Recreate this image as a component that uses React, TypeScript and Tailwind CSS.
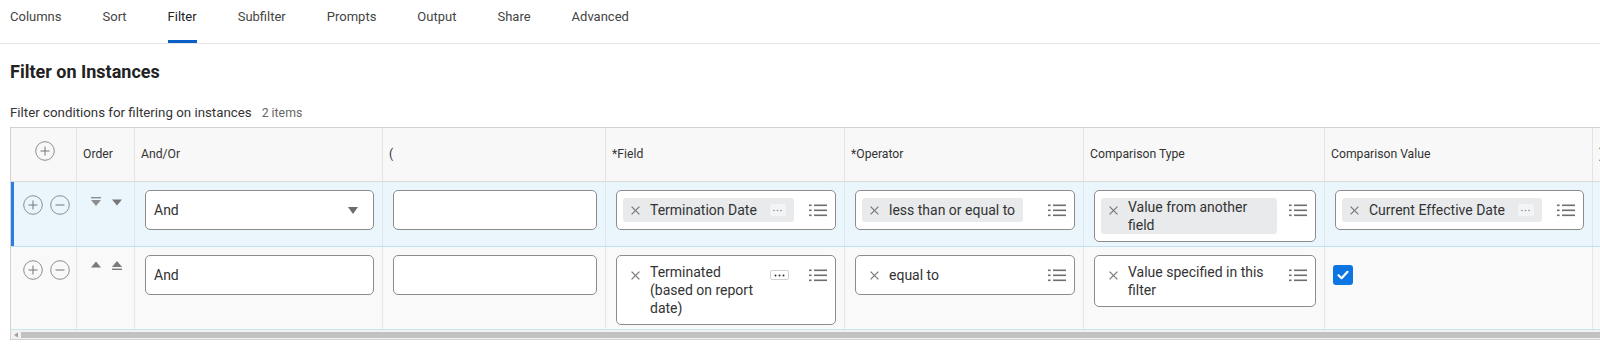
import React from "react";

const COLS = "grid grid-cols-[66px_58px_248px_223px_239px_239px_241px_268px_200px]";

function CircleIcon({ minus = false }: { minus?: boolean }) {
  return (
    <svg width="20" height="20" viewBox="0 0 20 20" className="shrink-0">
      <circle cx="10" cy="10" r="9.3" fill="none" stroke="#8c8c8c" strokeWidth="1" />
      <line x1="5.5" y1="10" x2="14.5" y2="10" stroke="#7f7f7f" strokeWidth="1.1" />
      {!minus && <line x1="10" y1="5.5" x2="10" y2="14.5" stroke="#7f7f7f" strokeWidth="1.1" />}
    </svg>
  );
}

function Tri({ dir, bar, color }: { dir: "up" | "down"; bar?: boolean; color: string }) {
  return (
    <svg width="10" height="10" viewBox="0 0 10 10" className="shrink-0">
      {dir === "down" ? (
        <>
          {bar && <rect x="0" y="0" width="10" height="1.4" fill={color} />}
          <polygon points={bar ? "0,3 10,3 5,9" : "0,2.5 10,2.5 5,8.5"} fill={color} />
        </>
      ) : (
        <>
          <polygon points={bar ? "0,7 10,7 5,1" : "0,7.5 10,7.5 5,1.5"} fill={color} />
          {bar && <rect x="0" y="8.6" width="10" height="1.4" fill={color} />}
        </>
      )}
    </svg>
  );
}

function XIcon() {
  return (
    <svg width="9" height="9" viewBox="0 0 9 9" className="shrink-0 mt-[7.5px]">
      <line x1="0.6" y1="0.6" x2="8.4" y2="8.4" stroke="#7a7a7a" strokeWidth="1.3" />
      <line x1="8.4" y1="0.6" x2="0.6" y2="8.4" stroke="#7a7a7a" strokeWidth="1.3" />
    </svg>
  );
}

function ListIcon() {
  return (
    <svg width="18" height="13" viewBox="0 0 18 13" className="shrink-0">
      {[0.5, 5.5, 10.5].map((y) => (
        <g key={y}>
          <rect x="0" y={y} width="2.6" height="1.6" fill="#6f6f6f" />
          <rect x="5" y={y} width="13" height="1.6" fill="#6f6f6f" />
        </g>
      ))}
    </svg>
  );
}

function MoreBtn({ outlined }: { outlined?: boolean }) {
  if (outlined) {
    return (
      <div className="shrink-0 ml-[13px] mt-[7px] w-[19px] h-[10px] border border-[#d0d0d0] bg-white rounded-[2px] flex items-center justify-center">
        <svg width="13" height="3" viewBox="0 0 13 3">
          <circle cx="2.5" cy="1.5" r="1" fill="#333" />
          <circle cx="6.5" cy="1.5" r="1" fill="#333" />
          <circle cx="10.5" cy="1.5" r="1" fill="#333" />
        </svg>
      </div>
    );
  }
  return (
    <div className="shrink-0 ml-[13px] mt-[6px] w-[16px] h-[12px] bg-[#f3f4f5] rounded-[2px] flex items-center justify-center">
      <svg width="11" height="3" viewBox="0 0 11 3">
        <circle cx="2" cy="1.5" r="0.8" fill="#8a8a8a" />
        <circle cx="5.5" cy="1.5" r="0.8" fill="#8a8a8a" />
        <circle cx="9" cy="1.5" r="0.8" fill="#8a8a8a" />
      </svg>
    </div>
  );
}

function ChipBox({ text, more, plain }: { text: string; more?: boolean; plain?: boolean }) {
  return (
    <div className="flex items-start bg-white border border-[#8c8c8c] rounded-[5px] pl-[6px] pr-[8px] py-[7px]">
      <div
        className={`flex items-start min-h-[24px] min-w-0 rounded-[3px] pl-[8px] pr-[8px] ${
          plain ? "" : "bg-[#e8eaec]"
        }`}
      >
        <XIcon />
        <div className="self-center ml-[10px] text-[14px] leading-[18px] text-[#333] min-w-0">{text}</div>
        {more && <MoreBtn outlined={plain} />}
      </div>
      <div className="ml-auto pl-[12px] mt-[6px] shrink-0">
        <ListIcon />
      </div>
    </div>
  );
}

function TextBox({ text, select }: { text?: string; select?: boolean }) {
  return (
    <div className="h-[40px] flex items-center bg-white border border-[#8c8c8c] rounded-[5px] pl-[8px] pr-[15px]">
      <span className="text-[14px] leading-[18px] text-[#333]">{text}</span>
      {select && (
        <svg width="10" height="7" viewBox="0 0 10 7" className="ml-auto">
          <polygon points="0,0 10,0 5,7" fill="#6b6b6b" />
        </svg>
      )}
    </div>
  );
}

function Checkbox() {
  return (
    <div className="w-[20px] h-[20px] rounded-[3px] bg-[#0a75e3] flex items-center justify-center">
      <svg width="12" height="10" viewBox="0 0 12 10">
        <path d="M1.5 5.2 L4.6 8.2 L10.5 1.8" fill="none" stroke="#fff" strokeWidth="2.2" strokeLinecap="round" strokeLinejoin="round" />
      </svg>
    </div>
  );
}

const tabs = ["Columns", "Sort", "Filter", "Subfilter", "Prompts", "Output", "Share", "Advanced"];
const headers = ["", "Order", "And/Or", "(", "*Field", "*Operator", "Comparison Type", "Comparison Value", ")"];

const cell = "pl-[10px] pr-[8px] pt-[8px] pb-[4px] border-r";

export default function App() {
  return (
    <div className="w-[1600px] h-[360px] overflow-hidden bg-white font-['Roboto',sans-serif] text-[#333]">
      {/* Tabs */}
      <div className="h-[44px] border-b border-[#e6e6e6] flex pl-[10px] gap-[41px]">
        {tabs.map((t) => (
          <div key={t} className="flex flex-col h-full">
            <div className={`pt-[7px] text-[13px] leading-[20px] ${t === "Filter" ? "text-[#222]" : "text-[#444]"}`}>{t}</div>
            <div className="flex-1" />
            <div className={`h-[3px] ${t === "Filter" ? "bg-[#0b5fc9]" : ""}`} />
          </div>
        ))}
      </div>

      <div className="px-[10px] mt-[16px] text-[18px] leading-[24px] font-bold text-[#222]">Filter on Instances</div>
      <div className="px-[10px] mt-[20px] leading-[18px] flex items-baseline">
        <span className="text-[13.3px] text-[#333]">Filter conditions for filtering on instances</span>
        <span className="ml-[10px] text-[12.3px] text-[#666]">2 items</span>
      </div>

      {/* Table */}
      <div className="mt-[5px] ml-[10px] w-[1800px] border border-[#d2d2d2]">
        {/* header */}
        <div className={`${COLS} h-[54px] bg-[#f8f8f8] border-b border-[#dadada]`}>
          {headers.map((h, i) =>
            i === 0 ? (
              <div key={i} className="border-r border-[#e4e4e4] pl-[24px] pt-[13px]">
                <CircleIcon />
              </div>
            ) : (
              <div key={i} className="border-r border-[#e4e4e4] pl-[6px] flex items-center text-[12.2px] text-[#333]">
                {h}
              </div>
            )
          )}
        </div>

        {/* row 1 */}
        <div className={`${COLS} bg-[#eaf6fb] border-b border-[#bfe0ef]`}>
          <div className="border-l-[3px] border-l-[#2a7de1] border-r border-r-[#dde8ee] pl-[9px] pt-[13px] flex gap-[7px] items-start">
            <CircleIcon />
            <CircleIcon minus />
          </div>
          <div className="border-r border-[#dde8ee] pl-[14px] pt-[15px] flex gap-[11px] items-start">
            <Tri dir="down" bar color="#8e8e8e" />
            <Tri dir="down" color="#777" />
          </div>
          <div className={`${cell} border-[#dde8ee]`}>
            <TextBox text="And" select />
          </div>
          <div className={`${cell} border-[#dde8ee]`}>
            <TextBox />
          </div>
          <div className={`${cell} border-[#dde8ee]`}>
            <ChipBox text="Termination Date" more />
          </div>
          <div className={`${cell} border-[#dde8ee]`}>
            <ChipBox text="less than or equal to" />
          </div>
          <div className={`${cell} border-[#dde8ee]`}>
            <ChipBox text="Value from another field" />
          </div>
          <div className={`${cell} border-[#dde8ee]`}>
            <ChipBox text="Current Effective Date" more />
          </div>
          <div className="border-r border-[#dde8ee]" />
        </div>

        {/* row 2 */}
        <div className={`${COLS} bg-[#f9f9f9] border-b border-[#c9e4f0]`}>
          <div className="border-r border-[#e6e6e6] pl-[12px] pt-[13px] flex gap-[7px] items-start">
            <CircleIcon />
            <CircleIcon minus />
          </div>
          <div className="border-r border-[#e6e6e6] pl-[14px] pt-[13px] flex gap-[11px] items-start">
            <Tri dir="up" color="#7a7a7a" />
            <Tri dir="up" bar color="#7a7a7a" />
          </div>
          <div className={`${cell} border-[#e6e6e6]`}>
            <TextBox text="And" />
          </div>
          <div className={`${cell} border-[#e6e6e6]`}>
            <TextBox />
          </div>
          <div className={`${cell} border-[#e6e6e6]`}>
            <ChipBox text="Terminated (based on report date)" more plain />
          </div>
          <div className={`${cell} border-[#e6e6e6]`}>
            <ChipBox text="equal to" plain />
          </div>
          <div className={`${cell} border-[#e6e6e6]`}>
            <ChipBox text="Value specified in this filter" plain />
          </div>
          <div className="border-r border-[#e6e6e6] pl-[8px] pt-[8px]">
            <div className="h-[40px] flex items-center">
              <Checkbox />
            </div>
          </div>
          <div className="border-r border-[#e6e6e6]" />
        </div>

        {/* scrollbar */}
        <div className="h-[9px] bg-[#f1f1f1] flex items-center">
          <svg width="6" height="6" viewBox="0 0 6 6" className="ml-[2px]">
            <polygon points="1,3 5,0.5 5,5.5" fill="#a0a0a0" />
          </svg>
          <div className="ml-[2px] flex-1 h-[6px] bg-[#c1c1c1]" />
        </div>
      </div>
    </div>
  );
}
